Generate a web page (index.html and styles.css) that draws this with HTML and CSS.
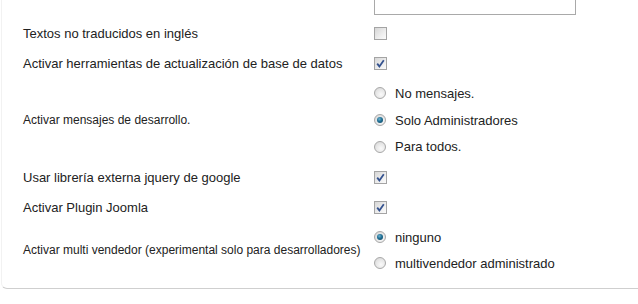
FILE: index.html
```html
<!DOCTYPE html>
<html lang="es">
<head>
    <meta charset="UTF-8">
    <title>Configuración</title>
    <link rel="stylesheet" href="styles.css">
</head>
<body>
    <div class="panel">
        <div class="row row-input">
            <div class="label"></div>
            <div class="control"><input type="text" class="text-input"></div>
        </div>

        <div class="row">
            <div class="label">Textos no traducidos en inglés</div>
            <div class="control"><span class="check"></span></div>
        </div>

        <div class="row">
            <div class="label">Activar herramientas de actualización de base de datos</div>
            <div class="control"><span class="check checked"><svg viewBox="0 0 13 13" width="13" height="13"><path d="M3.2 6.6 L5.4 9.4 L9.8 3.2" fill="none" stroke="#34528f" stroke-width="1.8"/></svg></span></div>
        </div>

        <div class="row row-group group-three">
            <div class="label small">Activar mensajes de desarrollo.</div>
            <div class="control radios">
                <label class="radio-item"><span class="radio"></span>No mensajes.</label>
                <label class="radio-item"><span class="radio on"></span>Solo Administradores</label>
                <label class="radio-item"><span class="radio"></span>Para todos.</label>
            </div>
        </div>

        <div class="row">
            <div class="label">Usar librería externa jquery de google</div>
            <div class="control"><span class="check checked"><svg viewBox="0 0 13 13" width="13" height="13"><path d="M3.2 6.6 L5.4 9.4 L9.8 3.2" fill="none" stroke="#34528f" stroke-width="1.8"/></svg></span></div>
        </div>

        <div class="row">
            <div class="label">Activar Plugin Joomla</div>
            <div class="control"><span class="check checked"><svg viewBox="0 0 13 13" width="13" height="13"><path d="M3.2 6.6 L5.4 9.4 L9.8 3.2" fill="none" stroke="#34528f" stroke-width="1.8"/></svg></span></div>
        </div>

        <div class="row row-group">
            <div class="label small">Activar multi vendedor (experimental solo para desarrolladores)</div>
            <div class="control radios">
                <label class="radio-item"><span class="radio on"></span>ninguno</label>
                <label class="radio-item"><span class="radio"></span>multivendedor administrado</label>
            </div>
        </div>
    </div>
</body>
</html>
```

FILE: styles.css
```css
body {
    margin: 0;
    padding: 0;
    background: #fff;
    font-family: Arial, "Liberation Sans", sans-serif;
    font-size: 13px;
    color: #222;
    overflow: hidden;
}
.panel {
    margin-left: 1px;
    padding-bottom: 10px;
    border-bottom: 1px solid #cfcfcf;
    border-left: 1px solid #f2f2f2;
    border-bottom-left-radius: 6px;
}
.row {
    display: flex;
    align-items: center;
    height: 30px;
}
.row-input {
    height: 18px;
    align-items: flex-end;
}
.row-input .control {
    align-self: flex-end;
    padding-bottom: 3px;
}
.label {
    width: 350px;
    padding-left: 21px;
    box-sizing: border-box;
    flex-shrink: 0;
    white-space: nowrap;
}
.label.small {
    font-size: 12px;
}
.control {
    display: flex;
    align-items: center;
    padding-left: 22px;
}
.text-input {
    width: 202px;
    height: 22px;
    margin: 0;
    box-sizing: border-box;
    border: 1px solid #a9a9a9;
    background: #fff;
    display: block;
}
.check {
    display: block;
    width: 13px;
    height: 13px;
    box-sizing: border-box;
    border: 1px solid #a4a4a4;
    background: linear-gradient(135deg, #d6d6d6 0%, #eeeeee 60%, #fbfbfb 100%);
    position: relative;
}
.check svg {
    position: absolute;
    top: -1px;
    left: -1px;
}
.row-group {
    height: auto;
    padding: 2px 0;
}
.radios {
    flex-direction: column;
    align-items: flex-start;
    gap: 0;
}
.radio-item {
    display: flex;
    align-items: center;
    height: 26px;
    gap: 9px;
}
.group-three .radio-item {
    height: 26.7px;
}
.radio {
    display: block;
    width: 12px;
    height: 12px;
    border-radius: 50%;
    box-sizing: border-box;
    border: 1px solid #a8a8a8;
    background: radial-gradient(circle at 60% 65%, #fafafa 0%, #e6e6e6 55%, #cfcfcf 100%);
    position: relative;
}
.radio.on::after {
    content: "";
    position: absolute;
    left: 2px;
    top: 2px;
    width: 6px;
    height: 6px;
    border-radius: 50%;
    background: radial-gradient(circle at 40% 35%, #6fb2d0 0%, #1f6f94 45%, #0d3f5a 100%);
}
```
